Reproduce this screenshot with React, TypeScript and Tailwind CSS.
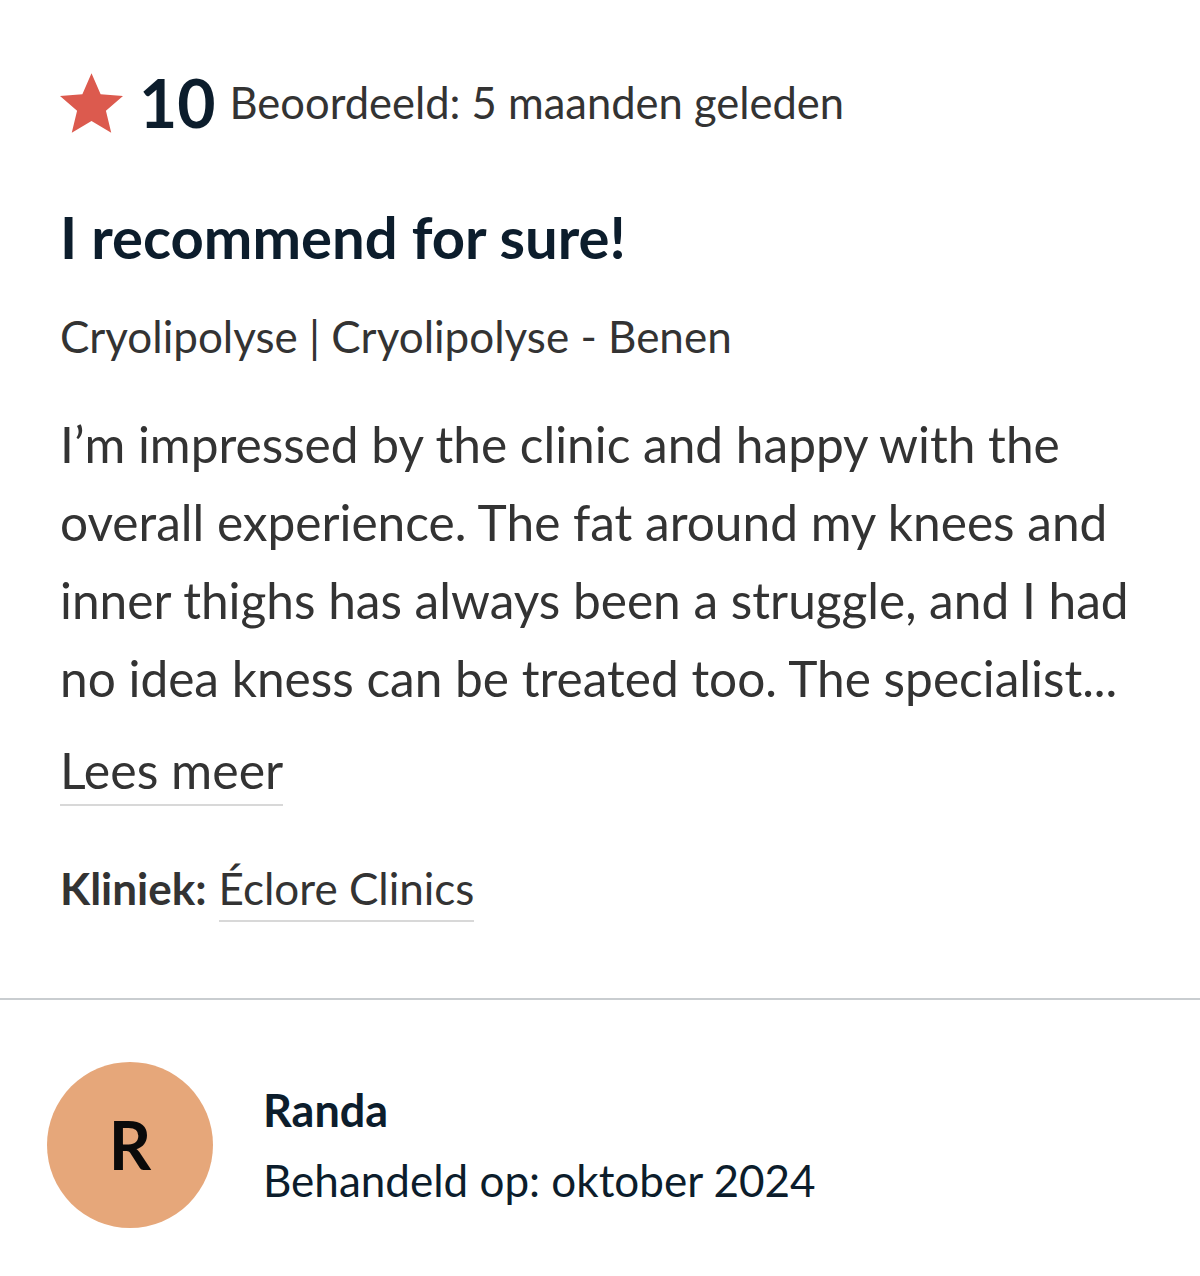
export default function App() {
  const font = { fontFamily: "Lato, 'Open Sans', sans-serif" };
  return (
    <div className="min-h-[1276px] w-[1200px] bg-white" style={font}>
      <div className="px-[60px] pt-[73px] pb-[76px]">
        <div className="flex h-[60px] items-center">
          <svg viewBox="1.3 1.5 21.4 20.2" className="h-[60px] w-[63px] shrink-0" aria-hidden>
            <path
              d="M12 1.5l3.1 7.1 7.6.6-5.8 5 1.8 7.5L12 17.7l-6.7 4 1.8-7.5-5.8-5 7.6-.6z"
              fill="#dc5a4e"
            />
          </svg>
          <span className="ml-[16px] text-[66px] font-bold leading-none text-[#0c1d2c]">10</span>
          <span className="ml-[14px] text-[43.5px] leading-none text-[#333333]">Beoordeeld: 5 maanden geleden</span>
        </div>

        <h2 className="mt-[69px] text-[58px] font-bold leading-[70px] text-[#0c1d2c]">I recommend for sure!</h2>

        <p className="mt-[34px] text-[44px] leading-[60px] text-[#333333]">Cryolipolyse | Cryolipolyse - Benen</p>

        <p className="mt-[39px] text-[49.6px] leading-[78px] text-[#333333]">
          I’m impressed by the clinic and happy with the
          <br />
          overall experience. The fat around my knees and
          <br />
          inner thighs has always been a struggle, and I had
          <br />
          no idea kness can be treated too. The specialist...
        </p>

        <a className="mt-[23px] inline-block border-b-2 border-[#d8d8d8] pb-[4px] text-[50px] leading-[60px] text-[#333333]">
          Lees meer
        </a>

        <div className="mt-[54px] flex items-baseline text-[44px] leading-[56px] text-[#333333]">
          <span className="font-bold">Kliniek:</span>
          <a className="ml-[12px] border-b-2 border-[#d8d8d8] pb-[4px]">Éclore Clinics</a>
        </div>
      </div>

      <div className="h-[2px] bg-[#c9cdd0]" />

      <div className="flex items-center gap-[50px] px-[47px] pt-[62px]">
        <div className="flex h-[166px] w-[166px] shrink-0 items-center justify-center rounded-full bg-[#e6a77a]">
          <span className="text-[66px] font-bold leading-none text-[#0a0a0a]">R</span>
        </div>
        <div className="flex flex-col gap-[14px] text-[#0c1d2c]">
          <span className="text-[45px] font-bold leading-[56px]">Randa</span>
          <span className="text-[44px] leading-[56px]">Behandeld op: oktober 2024</span>
        </div>
      </div>
    </div>
  );
}
